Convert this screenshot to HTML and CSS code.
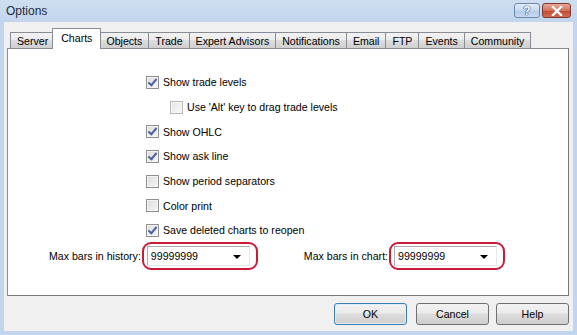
FILE: index.html
```html
<!DOCTYPE html>
<html lang="en">
<head>
  <meta charset="UTF-8" />
  <title>Options</title>
  <link rel="stylesheet" href="styles.css">
</head>
<body>
<div class="window">
  <div class="titlebar">
    <span class="title">Options</span>
    <span class="cap-btn help-btn">?</span>
    <span class="cap-btn close-btn">
      <svg width="12" height="10" viewBox="0 0 12 10"><path d="M2 1 L10 9 M10 1 L2 9" stroke="#fff" stroke-width="2.4" stroke-linecap="square"/></svg>
    </span>
  </div>

  <div class="client">
    <div class="tabs">
      <span class="tab">Server</span>
      <span class="tab active">Charts</span>
      <span class="tab">Objects</span>
      <span class="tab">Trade</span>
      <span class="tab">Expert Advisors</span>
      <span class="tab">Notifications</span>
      <span class="tab">Email</span>
      <span class="tab">FTP</span>
      <span class="tab">Events</span>
      <span class="tab">Community</span>
    </div>

    <div class="panel">
      <div class="checks">
        <label class="check on"><span class="box"></span>Show trade levels</label>
        <label class="check sub"><span class="box"></span>Use 'Alt' key to drag trade levels</label>
        <label class="check on"><span class="box"></span>Show OHLC</label>
        <label class="check on"><span class="box"></span>Show ask line</label>
        <label class="check"><span class="box"></span>Show period separators</label>
        <label class="check"><span class="box"></span>Color print</label>
        <label class="check on"><span class="box"></span>Save deleted charts to reopen</label>
      </div>

      <div class="bars">
        <div class="field history">
          <span class="field-label">Max bars in history:</span>
          <span class="ring"><span class="combo">99999999<span class="arrow"></span></span></span>
        </div>
        <div class="field chart">
          <span class="field-label">Max bars in chart:</span>
          <span class="ring"><span class="combo">99999999<span class="arrow"></span></span></span>
        </div>
      </div>
    </div>

    <div class="buttons">
      <button class="default">OK</button>
      <button>Cancel</button>
      <button>Help</button>
    </div>
  </div>
</div>
</body>
</html>
```

FILE: styles.css
```css
body { margin: 0; width: 577px; height: 335px; overflow: hidden; font-family: "Liberation Sans", Arial, sans-serif; font-size: 10.6px; color: #000; }
.window { width: 577px; height: 335px; box-sizing: border-box; background: linear-gradient(#cfdff1, #c2d5ec 22px, #c2d5ec); padding: 0 4px 4px 4px; display: flex; flex-direction: column; }

.titlebar { height: 22px; display: flex; align-items: center; position: relative; }
.title { font-size: 12px; color: #1e2a3a; margin-left: 2px; flex: 1; }
.cap-btn { height: 15px; box-sizing: border-box; border: 1px solid #6d88ad; border-radius: 3px; display: flex; align-items: center; justify-content: center; margin-top: -1px; }
.help-btn { width: 26px; background: linear-gradient(#e4eef9, #c6d8ee 50%, #b2c9e6 51%, #c8dcf2); color: #fff; font-weight: bold; font-size: 12px; text-shadow: 0 0 1px #2b4b77, 0 0 1px #2b4b77, 0 0 1px #2b4b77; margin-right: 2px; }
.close-btn { width: 29px; background: linear-gradient(#e9a99c, #d3705c 50%, #c04a31 51%, #d26b50); border-color: #7b3a30; margin-right: 2px; }

.client { flex: 1; background: #f0f0f0; padding: 6px 4px 6px 3px; display: flex; flex-direction: column; }

.tabs { display: flex; align-items: flex-end; padding-left: 3px; height: 20px; position: relative; z-index: 1; }
.tab { height: 16px; box-sizing: border-box; padding: 1px 6px 0 6px; border: 1px solid #898c95; border-bottom: none; margin-right: -1px; background: linear-gradient(#f2f2f2, #ebebeb 45%, #dddddd 50%, #cfcfcf); line-height: 14px; white-space: nowrap; }
.tab.active { height: 21px; background: #fff; margin: 0 -2px -1px -2px; padding: 2px 8px 0 8px; position: relative; z-index: 2; }

.panel { height: 248px; box-sizing: border-box; background: #fff; border: 1px solid #898c95; border-right-color: #7a7a7a; border-bottom-color: #7a7a7a; padding-top: 21px; }

.checks { display: flex; flex-direction: column; padding-left: 138px; }
.check { display: flex; align-items: center; height: 24.7px; }
.check.sub { padding-left: 24px; }
.box { width: 13px; height: 13px; box-sizing: border-box; border: 1px solid #8f8f8f; background: linear-gradient(135deg, #dcdcdc, #f6f6f6); margin-right: 4px; position: relative; box-shadow: inset 0 0 0 1px #f4f4f4; }
.check.sub .box { border-color: #b8b8b8; background: linear-gradient(135deg, #e6e6e6, #f8f8f8); }
.check.on .box::after { content: ""; position: absolute; left: 3px; top: 0; width: 3px; height: 7px; border: solid #4d61a0; border-width: 0 2px 2px 0; transform: rotate(40deg); }

.bars { display: flex; margin-top: -1px; }
.field { display: flex; align-items: center; }
.history { padding-left: 41px; }
.chart { padding-left: 46px; }
.field-label { margin-right: 1px; }
.ring { border: 2px solid #cc1b36; border-radius: 9px; padding: 2px 6px 2px 3px; }
.combo { display: flex; align-items: center; width: 103px; height: 20px; box-sizing: border-box; border: 1px solid #abadb3; border-right-color: #e3e9ef; border-bottom-color: #e3e9ef; padding-left: 3px; position: relative; }
.arrow { position: absolute; right: 8px; top: 8px; width: 0; height: 0; border-left: 4px solid transparent; border-right: 4px solid transparent; border-top: 4px solid #000; }

.buttons { display: flex; justify-content: flex-end; gap: 7px; margin-top: 7px; }
button { width: 73px; height: 22px; font-family: "Liberation Sans", Arial, sans-serif; font-size: 10.6px; color: #000; border: 1px solid #707070; border-radius: 3px; background: linear-gradient(#f2f2f2, #ebebeb 45%, #dddddd 50%, #cfcfcf); padding: 0; }
button.default { border-color: #3c7fb1; box-shadow: inset 0 0 0 1px #dcecfc; margin-right: 2px; }
```
